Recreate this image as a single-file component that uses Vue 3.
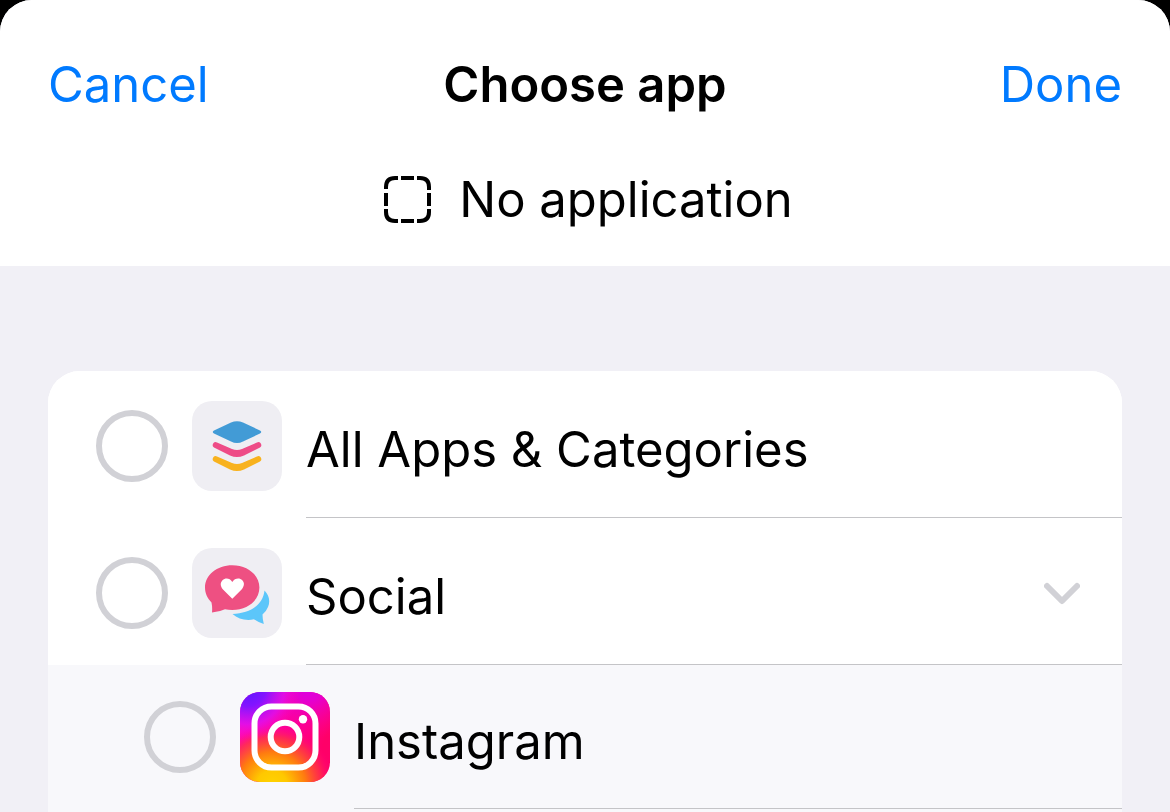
<script setup>
import { ref } from 'vue'

const selected = ref('')
const rows = [
  { id: 'all', label: 'All Apps & Categories' },
  { id: 'social', label: 'Social', expandable: true },
  { id: 'instagram', label: 'Instagram', nested: true },
]
</script>

<template>
  <div class="sheet">
    <header class="top">
      <nav class="bar">
        <button type="button" class="action">Cancel</button>
        <h1 class="title">Choose app</h1>
        <button type="button" class="action end">Done</button>
      </nav>
      <p class="summary">
        <svg class="dashed" viewBox="0 0 48 48" fill="none" stroke="#000" stroke-width="4" aria-hidden="true">
          <path d="M3 13V11Q3 2 12 2H15M18 2H31M34 2H37Q46 2 46 11V14M46 17V30M46 33V36Q46 45 37 45H34M31 45H18M15 45H12Q3 45 3 36V33M3 30V17" />
        </svg>
        <span>No application</span>
      </p>
    </header>

    <main class="body">
      <ul class="card">
        <li v-for="row in rows" :key="row.id" class="row" :class="{ nested: row.nested }">
          <input :id="row.id" v-model="selected" class="radio" type="radio" name="app" :value="row.id" />

          <svg v-if="row.id === 'all'" class="icon" viewBox="0 0 90 90" aria-hidden="true">
            <rect width="90" height="90" rx="20" fill="#efeef3" />
            <path fill="#429bd6" d="M22 29.500 39 21.500Q45 19 51 21.500L68 29.500Q70.500 31 68 32.500L51 40.500Q45 43.500 39 40.500L22 32.500Q19.500 31 22 29.500Z" />
            <path fill="#ee4c87" d="M25 41.500 40 48Q45 50 50 48L65 41.500Q67 40.500 68.500 42Q70.500 45 68 46.500L52 54.500Q45 57.500 38 54.500L22 46.500Q19.500 45 21.500 42Q23 40.500 25 41.500Z" />
            <path fill="#f8b21e" d="M25 55.500 40 62Q45 64 50 62L65 55.500Q67 54.500 68.500 56Q70.500 59 68 60.500L52 68.500Q45 71.500 38 68.500L22 60.500Q19.500 59 21.500 56Q23 54.500 25 55.500Z" />
          </svg>

          <svg v-else-if="row.id === 'social'" class="icon" viewBox="0 0 90 90" aria-hidden="true">
            <rect width="90" height="90" rx="20" fill="#efeef3" />
            <path fill="#5cc6fa" d="M72.500 42.500C77 47 78.500 53 76 59Q74.500 63 70.500 66.500Q70.500 71 71.800 76Q66.500 74.500 62 71.300C54 73 46 71 40.500 66C58 65.500 71 57 72.500 42.500Z" />
            <path fill="#ee5082" d="M40.200 17.300C55.500 17.300 67.400 27 67.400 39.600C67.400 52.500 55.500 62 40.200 62Q36.500 62 33 61.200Q27 64 20 64.500Q20.500 59 19.500 54.500C15.500 50.500 13 45.500 13 39.600C13 27 25 17.300 40.200 17.300Z" />
            <path fill="#fff" d="M40.300 50.800 31 41.500C28 38 28.200 34.500 30.500 32.300C33.500 29.500 38 30.300 40.300 34C42.600 30.300 47.500 29.500 50.300 32.300C52.600 34.500 52.600 38 49.600 41.500Z" />
          </svg>

          <svg v-else class="icon" viewBox="0 0 90 90" aria-hidden="true">
            <defs>
              <linearGradient id="ig-base" x1="0" y1="0" x2="1" y2="0.400">
                <stop offset="0" stop-color="#ff10c8" />
                <stop offset="0.500" stop-color="#ff00a0" />
                <stop offset="1" stop-color="#ff0068" />
              </linearGradient>
              <radialGradient id="ig-magenta" gradientUnits="userSpaceOnUse" cx="68" cy="-8" r="56">
                <stop offset="0" stop-color="#d800e8" />
                <stop offset="0.300" stop-color="#e400d0" />
                <stop offset="1" stop-color="#ff0098" stop-opacity="0" />
              </radialGradient>
              <radialGradient id="ig-violet" gradientUnits="userSpaceOnUse" cx="8" cy="-4" r="52">
                <stop offset="0" stop-color="#5a18ff" />
                <stop offset="0.350" stop-color="#8414ff" />
                <stop offset="0.700" stop-color="#dc10f0" stop-opacity="0.800" />
                <stop offset="1" stop-color="#ff08c0" stop-opacity="0" />
              </radialGradient>
              <radialGradient id="ig-yellow" gradientUnits="userSpaceOnUse" cx="32" cy="94" r="62">
                <stop offset="0" stop-color="#ffd400" />
                <stop offset="0.250" stop-color="#ffc800" />
                <stop offset="0.550" stop-color="#ff7a10" />
                <stop offset="0.800" stop-color="#ff3048" stop-opacity="0.800" />
                <stop offset="1" stop-color="#ff0080" stop-opacity="0" />
              </radialGradient>
            </defs>
            <rect width="90" height="90" rx="20" fill="url(#ig-base)" />
            <rect width="90" height="90" rx="20" fill="url(#ig-magenta)" />
            <rect width="90" height="90" rx="20" fill="url(#ig-yellow)" />
            <rect width="90" height="90" rx="20" fill="url(#ig-violet)" />
            <rect x="14.500" y="14.500" width="61" height="61" rx="17" fill="none" stroke="#fff" stroke-width="6" />
            <circle cx="45" cy="45" r="14.300" fill="none" stroke="#fff" stroke-width="6" />
            <circle cx="63" cy="27.300" r="4.200" fill="#fff" />
          </svg>

          <div class="content">
            <label class="name" :for="row.id">{{ row.label }}</label>
            <button v-if="row.expandable" type="button" class="expand" aria-label="Collapse Social">
              <svg viewBox="0 0 36 24" fill="none" stroke="#d1d1d6" stroke-width="6" stroke-linecap="round" stroke-linejoin="round" aria-hidden="true">
                <path d="M3 4 18 19 33 4" />
              </svg>
            </button>
          </div>
        </li>
      </ul>
    </main>
  </div>
</template>

<style>
body {
  margin: 0;
  background: #000;
}
</style>

<style scoped>
.sheet {
  display: flex;
  flex-direction: column;
  min-height: 100vh;
  overflow: hidden;
  border-radius: 32px 32px 0 0;
  background: #f1f0f6;
  color: #000;
  font-family: Inter, "Liberation Sans", sans-serif;
  font-size: 49px;
  line-height: 72px;
}

button {
  padding: 0;
  border: 0;
  background: none;
  font: inherit;
  cursor: pointer;
}

.top {
  padding: 49px 48px 30px;
  background: #fff;
}

.bar {
  display: grid;
  grid-template-columns: 1fr auto 1fr;
  align-items: center;
}

.action {
  justify-self: start;
  color: #007aff;
}

.end {
  justify-self: end;
}

.title {
  margin: 0;
  font-size: 49px;
  font-weight: 600;
}

.summary {
  display: flex;
  align-items: center;
  justify-content: center;
  gap: 28px;
  margin: 43px 0 0;
  padding-left: 6px;
}

.dashed {
  width: 48px;
  height: 48px;
}

.body {
  display: flex;
  flex: 1;
  flex-direction: column;
  padding: 105px 48px 0;
}

.card {
  flex: 1;
  margin: 0;
  padding: 0;
  overflow: hidden;
  border-radius: 32px 32px 0 0;
  background: linear-gradient(#fff 50%, #f8f8fb 50%);
  list-style: none;
}

.row {
  display: flex;
  box-sizing: border-box;
  align-items: center;
  gap: 24px;
  height: 147px;
  padding: 2px 0 0 48px;
  background: #fff;
}

.nested {
  height: 144px;
  padding: 0 0 0 96px;
  background: #f8f8fb;
}

.radio {
  flex: none;
  box-sizing: border-box;
  width: 72px;
  height: 72px;
  margin: 0;
  border: 6px solid #d1d1d6;
  border-radius: 50%;
  appearance: none;
}

.radio:checked {
  border-color: #007aff;
  background: #007aff;
}

.icon {
  flex: none;
  width: 90px;
  height: 90px;
}

.content {
  display: flex;
  flex: 1;
  align-items: center;
  align-self: stretch;
  justify-content: space-between;
  padding-right: 42px;
  border-bottom: 1px solid #c4c4c7;
}

.name {
  padding-top: 10px;
}

.expand {
  display: flex;
  padding-top: 4px;
}

.expand svg {
  width: 36px;
  height: 24px;
}
</style>
